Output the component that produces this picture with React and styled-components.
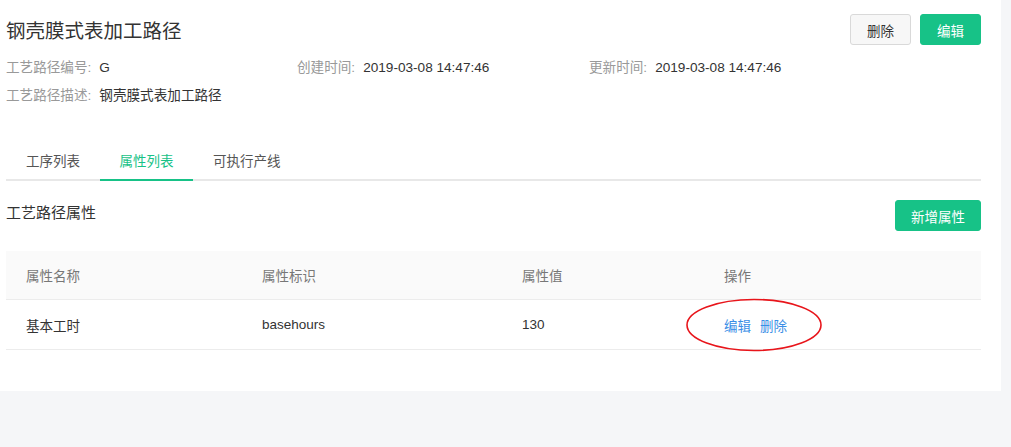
import React, { useState } from 'react';
import styled, { createGlobalStyle } from 'styled-components';

const GlobalStyle = createGlobalStyle`
  html, body {
    margin: 0;
    padding: 0;
    background: #f5f6f8;
    font-family: "Liberation Sans", "Noto Sans CJK SC", Arial, sans-serif;
    color: #333;
  }
`;

const Page = styled.div`
  width: 1001px;
  background: #fff;
  box-sizing: border-box;
  padding: 14px 20px 41px 6px;
`;

const HeaderRow = styled.div`
  display: flex;
  justify-content: space-between;
  align-items: flex-start;
`;

const Title = styled.h1`
  margin: 0;
  padding-top: 3px;
  font-size: 19.5px;
  font-weight: normal;
  color: #333;
  line-height: 28px;
`;

const Actions = styled.div`
  display: flex;
  gap: 9px;
`;

const Button = styled.button`
  height: 31px;
  padding: 0 ${p => (p.$wide ? '15px' : '16px')};
  border-radius: 3px;
  font-family: inherit;
  font-size: 13.5px;
  cursor: pointer;
  border: 1px solid ${p => (p.$primary ? '#17c287' : '#d9d9d9')};
  background: ${p => (p.$primary ? '#17c287' : '#f7f7f7')};
  color: ${p => (p.$primary ? '#fff' : '#333')};
`;

const MetaGrid = styled.div`
  display: grid;
  grid-template-columns: 291px 292px 1fr;
  row-gap: 10px;
  margin-top: 14px;
  font-size: 13.6px;
  line-height: 18px;
`;

const Meta = styled.div`
  color: #333;
  grid-column: ${p => (p.$full ? '1 / 4' : 'auto')};
  span {
    color: #999;
    margin-right: 8px;
  }
`;

const Tabs = styled.div`
  display: flex;
  margin-top: 48px;
  border-bottom: 2px solid #e8e8e8;
`;

const Tab = styled.div`
  padding: 0 19.5px 8px 20px;
  font-size: 13.5px;
  line-height: 18px;
  cursor: pointer;
  color: ${p => (p.$active ? '#17c287' : '#555')};
  margin-bottom: -2px;
  border-bottom: 2px solid ${p => (p.$active ? '#17c287' : 'transparent')};
`;

const SectionRow = styled.div`
  display: flex;
  justify-content: space-between;
  align-items: center;
  margin-top: 19px;
`;

const SectionTitle = styled.div`
  font-size: 15px;
  color: #333;
  margin-top: -9px;
`;

const Table = styled.div`
  position: relative;
  margin-top: 20px;
`;

const Row = styled.div`
  display: grid;
  grid-template-columns: 236px 260px 202px 1fr;
  height: ${p => (p.$head ? '48px' : '49px')};
  align-items: center;
  padding-left: 20px;
  font-size: 13.5px;
  background: ${p => (p.$head ? '#fafafa' : '#fff')};
  color: ${p => (p.$head ? '#777' : '#333')};
  border-bottom: 1px solid #ececec;
`;

const LinkGroup = styled.div`
  display: flex;
  gap: 9px;
`;

const Link = styled.a`
  color: #3a8ee6;
  text-decoration: none;
  cursor: pointer;
`;

const Annotation = styled.svg`
  position: absolute;
  left: 678px;
  top: 45px;
  pointer-events: none;
`;

const tabs = ['工序列表', '属性列表', '可执行产线'];

export default function App() {
  const [active, setActive] = useState(1);
  return (
    <>
      <GlobalStyle />
      <Page>
        <HeaderRow>
          <Title>钢壳膜式表加工路径</Title>
          <Actions>
            <Button>删除</Button>
            <Button $primary>编辑</Button>
          </Actions>
        </HeaderRow>

        <MetaGrid>
          <Meta><span>工艺路径编号:</span>G</Meta>
          <Meta><span>创建时间:</span>2019-03-08 14:47:46</Meta>
          <Meta><span>更新时间:</span>2019-03-08 14:47:46</Meta>
          <Meta $full><span>工艺路径描述:</span>钢壳膜式表加工路径</Meta>
        </MetaGrid>

        <Tabs>
          {tabs.map((t, i) => (
            <Tab key={t} $active={i === active} onClick={() => setActive(i)}>{t}</Tab>
          ))}
        </Tabs>

        <SectionRow>
          <SectionTitle>工艺路径属性</SectionTitle>
          <Button $primary $wide>新增属性</Button>
        </SectionRow>

        <Table>
          <Row $head>
            <div>属性名称</div>
            <div>属性标识</div>
            <div>属性值</div>
            <div>操作</div>
          </Row>
          <Row>
            <div>基本工时</div>
            <div>basehours</div>
            <div>130</div>
            <LinkGroup>
              <Link>编辑</Link>
              <Link>删除</Link>
            </LinkGroup>
          </Row>
          <Annotation width="140" height="58" viewBox="0 0 140 58">
            <ellipse cx="70" cy="29" rx="67" ry="25.5" fill="none" stroke="#e8151b" strokeWidth="1.6" />
          </Annotation>
        </Table>
      </Page>
    </>
  );
}
